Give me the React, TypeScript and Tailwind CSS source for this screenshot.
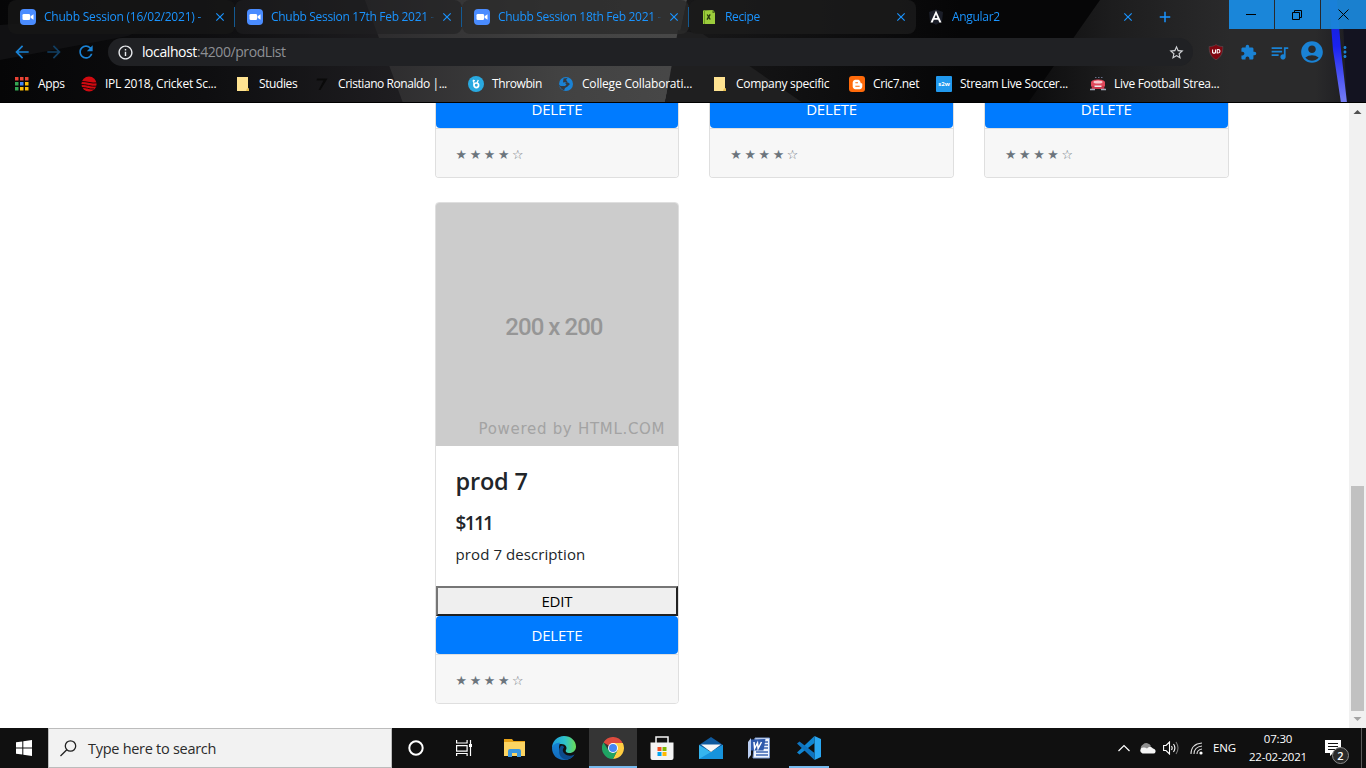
import React from "react";
import {
  MdAccountCircle,
  MdAdd,
  MdArrowBack,
  MdArrowForward,
  MdClose,
  MdExtension,
  MdInfoOutline,
  MdMoreVert,
  MdQueueMusic,
  MdRefresh,
  MdStarBorder,
} from "react-icons/md";
import { FaBloggerB } from "react-icons/fa";

const ZoomIcon = () => (
  <svg width="16" height="16" viewBox="0 0 16 16">
    <rect width="16" height="16" rx="4" fill="#4a8cff" />
    <rect x="2.5" y="5" width="7.6" height="6" rx="1.3" fill="#fff" />
    <path d="M10.6 7.2 13.5 5.2V10.8L10.6 8.8Z" fill="#fff" />
  </svg>
);

const RecipeIcon = () => (
  <svg width="16" height="16" viewBox="0 0 16 16">
    <path d="M2 1.5 12 1l2 2.5V15H2Z" fill="#9ccc3c" />
    <path d="M3.5 1v14" stroke="#6f9f22" strokeWidth="1" />
    <path d="M11.500 1v3H14" fill="#4c6b17" />
    <path d="m6.200 5.500 3 5M9.200 5.300 6 10.700" stroke="#26380d" strokeWidth="1.400" />
  </svg>
);

const AngularIcon = () => (
  <svg width="16" height="16" viewBox="0 0 16 16">
    <path d="M8 .5 15 3l-1 9.500L8 15.800 2 12.500 1 3Z" fill="#1b1e28" />
    <path d="M8 1.500 2.500 13.500h2.200l1.100-2.700h4.400l1.100 2.700h2.200Zm0 4 1.400 3.400H6.600Z" fill="#fff" fillRule="evenodd" />
  </svg>
);

const AppsIcon = () => (
  <svg width="16" height="16" viewBox="0 0 16 16">
    {["#ea4335", "#ea4335", "#ea4335", "#34a853", "#4285f4", "#fbbc05", "#34a853", "#fbbc05", "#fbbc05"].map((c, i) => (
      <rect key={i} x={1 + (i % 3) * 5} y={1 + Math.floor(i / 3) * 5} width="3.500" height="3.500" fill={c} />
    ))}
  </svg>
);

const CricketIcon = () => (
  <svg width="16" height="16" viewBox="0 0 16 16">
    <circle cx="8" cy="8" r="7.600" fill="#d10a10" />
    <path d="M0 5.500C5 5 11 8 16 6.800M0 8.500c5-.5 10 2.500 15.500 1.700M1 11.500c4-.3 7 2 12 1.500" stroke="#240406" strokeWidth="1" fill="none" />
  </svg>
);

const FolderIcon = () => (
  <svg width="16" height="16" viewBox="0 0 16 16">
    <path d="M2 1H13V12.500L14 12.500V15H2Z" fill="#ffe391" />
    <path d="M12 12.500h2V15H11Z" fill="#e8bf4e" />
  </svg>
);

const SevenIcon = () => (
  <svg width="16" height="16" viewBox="0 0 16 16">
    <path d="M3 2.500h10.500L6.500 14H4.500L9.500 4.500H2.500Z" fill="#0a0a0a" />
  </svg>
);

const ThrowbinIcon = () => (
  <svg width="16" height="16" viewBox="0 0 16 16">
    <circle cx="8" cy="8" r="8" fill="#29a9e0" />
    <circle cx="8.300" cy="9.300" r="2.300" fill="none" stroke="#fff" strokeWidth="1.700" />
    <path d="m5.500 3.800.6 5.200M10.300 4 9 7M4.500 5 7 4.500" stroke="#fff" strokeWidth="1.200" />
  </svg>
);

const GlobeIcon = () => (
  <svg width="16" height="16" viewBox="0 0 16 16">
    <circle cx="8" cy="8" r="7" fill="#1a82d4" />
    <path d="M5.500 2.500 9.500 2 8 4 9.500 5.500 7 7 8.500 8.500 7 10H2.500L1.300 8.500v1.500Q3 13 6 14.500L7 12l2.500-1.500L12 8 10 6.500 8 6 5 6.500Z" fill="#353a40" />
  </svg>
);

const BloggerIcon = () => (
  <span className="flex size-4 items-center justify-center rounded-[3px] bg-[#ff6a0a] text-white">
    <FaBloggerB size={11} />
  </span>
);

const StreamIcon = () => (
  <span className="flex size-4 items-center justify-center rounded-[1px] bg-[#2199ee] text-[6px] leading-none font-bold text-white">s2w</span>
);

const StadiumIcon = () => (
  <svg width="16" height="16" viewBox="0 0 16 16">
    <path d="M1 6c1-3.500 13-3.500 14 0v4c0 2-14 2-14 0Z" fill="#e0475a" />
    <ellipse cx="8" cy="6" rx="4.500" ry="1.500" fill="#f7c9cf" />
    <path d="M2 10h12l.5 3h-13Z" fill="#c9374a" />
    <path d="M4.500 9.500h7V11h-7z" fill="#eee" />
    <path d="M0 13.500h5M11 13.500h5" stroke="#a3abba" strokeWidth="1.500" />
    <path d="M5 1.500h1.500M8 1.500h1.500M11 1.500h1.500" stroke="#67708a" />
  </svg>
);

const tabs = [
  { title: "Chubb Session (16/02/2021) -", Icon: ZoomIcon, tone: "bg-[#161617]/80", t: "tracking-[-0.22px]" },
  { title: "Chubb Session 17th Feb 2021 -", Icon: ZoomIcon, tone: "bg-[#202021]/60", t: "tracking-[-0.3px]" },
  { title: "Chubb Session 18th Feb 2021 -", Icon: ZoomIcon, tone: "bg-[#2a2a2b]/80", t: "tracking-[-0.3px]" },
  { title: "Recipe", Icon: RecipeIcon, tone: "bg-[#1b1b1c]/80", t: "tracking-[-0.35px]" },
  { title: "Angular2", Icon: AngularIcon, tone: "", t: "tracking-[-0.3px]" },
];

const bookmarks = [
  { label: "Apps", Icon: AppsIcon, w: "w-[67px]", t: "tracking-[-0.3px]" },
  { label: "IPL 2018, Cricket Sc...", Icon: CricketIcon, w: "w-[154px]", t: "tracking-[-0.25px]" },
  { label: "Studies", Icon: FolderIcon, w: "w-[79px]", t: "tracking-[-0.4px]" },
  { label: "Cristiano Ronaldo |...", Icon: SevenIcon, w: "w-[154px]", t: "tracking-[-0.43px]" },
  { label: "Throwbin", Icon: ThrowbinIcon, w: "w-[90px]", t: "tracking-[-0.4px]" },
  { label: "College Collaborati...", Icon: GlobeIcon, w: "w-[154px]", t: "tracking-[-0.19px]" },
  { label: "Company specific", Icon: FolderIcon, w: "w-[137px]", t: "tracking-[-0.29px]" },
  { label: "Cric7.net", Icon: BloggerIcon, w: "w-[87px]", t: "tracking-[-0.4px]" },
  { label: "Stream Live Soccer...", Icon: StreamIcon, w: "w-[154px]", t: "tracking-[-0.34px]" },
  { label: "Live Football Strea...", Icon: StadiumIcon, w: "w-[154px]", t: "tracking-[-0.3px]" },
];

const ThemeBackdrop = () => (
  <svg className="absolute inset-0" width="1366" height="103" viewBox="0 0 1366 103">
    <defs>
      <linearGradient id="left" x1="0" x2="1">
        <stop offset="0" stopColor="#060607" />
        <stop offset="0.5" stopColor="#0e0e10" />
        <stop offset="1" stopColor="#1f1e21" />
      </linearGradient>
      <linearGradient id="mid" x1="0" x2="1">
        <stop offset="0" stopColor="#2b2a2c" />
        <stop offset="0.6" stopColor="#424242" />
        <stop offset="1" stopColor="#484848" />
      </linearGradient>
      <linearGradient id="shade" x1="0" x2="1">
        <stop offset="0" stopColor="#19191a" />
        <stop offset="1" stopColor="#060607" />
      </linearGradient>
      <linearGradient id="right" x1="0" x2="1">
        <stop offset="0" stopColor="#0c0c0d" />
        <stop offset="0.25" stopColor="#1d1d1e" />
        <stop offset="0.6" stopColor="#2a2a2b" />
        <stop offset="0.85" stopColor="#2a2a2b" />
        <stop offset="1" stopColor="#17171d" />
      </linearGradient>
      <linearGradient id="beam" x1="0" y1="0" x2="0" y2="1">
        <stop offset="0" stopColor="#1020c8" />
        <stop offset="0.45" stopColor="#1a22f0" />
        <stop offset="1" stopColor="#7880f4" />
      </linearGradient>
    </defs>
    <rect width="1366" height="103" fill="#060607" />
    <rect width="410" height="103" fill="url(#left)" />
    <path d="M0 25 180 12 128 36 0 60Z" fill="#111113" />
    <path d="M365 0H687L665 103H403Z" fill="url(#mid)" />
    <path d="M687 0H960V103H665Z" fill="url(#shade)" />
    <path d="M678 30 703 34 803 103H665Z" fill="#1f1f20" />
    <path d="M1100 0H1366V103H1028Z" fill="url(#right)" />
    <path d="M1342 0H1366V103H1347Z" fill="#131320" />
    <path d="M1329 0H1337L1341 50 1347 103H1341L1333 50Z" fill="url(#beam)" />
    <rect y="102" width="1366" height="1" fill="#000" />
  </svg>
);

const Header = () => (
  <header className="relative h-[103px] shrink-0 overflow-hidden bg-[#060608]">
    <ThemeBackdrop />
    <div className="relative flex h-[102px] flex-col">
      <div className="flex h-[34px] pl-2">
        {tabs.map(({ title, Icon, tone, t }, i) => (
          <div key={i} className={`relative flex w-[227px] shrink-0 items-center rounded-lg pl-3 ${tone}`}>
            <Icon />
            <span className={`ml-2 w-[164px] mask-r-from-94% text-[12px] leading-4 whitespace-nowrap text-[#1a94ff] ${t}`}>{title}</span>
            <MdClose className="ml-[5px] shrink-0 text-[#1a94ff]" size={14} />
            {i < 3 && <span className="absolute top-[7px] right-0 h-5 w-px bg-[#145a92]" />}
          </div>
        ))}
        <MdAdd className="mt-[8px] ml-[13px] text-[#1a94ff]" size={18} />
        <div className="ml-auto flex h-[29px] gap-px text-black">
          <div className="flex w-[45px] items-center justify-center bg-[#1a86d9]">
            <svg className="-ml-[2px]" width="10" height="10"><path d="M0 4.500h10" stroke="currentColor" /></svg>
          </div>
          <div className="flex w-[45px] items-center justify-center bg-[#1a86d9]">
            <svg className="-ml-[2px]" width="10" height="10" fill="none" stroke="currentColor"><path d="M.5 2.500h7v7h-7zM2.500 2.500v-2h7v7h-2" /></svg>
          </div>
          <div className="flex w-[45px] items-center justify-center bg-[#1a86d9]/95">
            <svg className="-ml-[1px]" width="11" height="11" stroke="currentColor"><path d="m.5.500 10 10M10.500.500l-10 10" /></svg>
          </div>
        </div>
      </div>
      <div className="flex h-9 items-center pl-3 text-[#1a82d4]">
        <MdArrowBack size={20} />
        <MdArrowForward className="ml-3 text-[#123f63]" size={20} />
        <MdRefresh className="ml-3" size={20} />
        <div className="ml-3 flex h-7 w-[1085px] items-center rounded-full bg-[#202124] pr-2 pl-[9px] text-[#e8eaed]">
          <MdInfoOutline size={17} />
          <p className="ml-2 text-[14px] leading-5 tracking-[-0.42px] text-[#8e9094]">
            <span className="text-white">localhost</span>:4200/prodList
          </p>
          <MdStarBorder className="ml-auto text-[#d0d2d5]" size={17} />
        </div>
        <svg className="ml-[15px]" width="16" height="16" viewBox="0 0 16 16">
          <path d="M8 .5C10 2 12 2.500 14.800 2.500 15 9 13 13 8 15.800 3 13 1 9 1.200 2.500 4 2.500 6 2 8 .5Z" fill="#800610" stroke="#5d5054" strokeWidth=".6" />
          <path d="M4.600 5.500v3q1.500 1.400 2.900 0v-3M9.200 5.500v3.400q2.700.3 2.700-1.700t-2.700-1.700" fill="none" stroke="#fff" strokeWidth="1.100" />
        </svg>
        <MdExtension className="ml-4" size={17} />
        <MdQueueMusic className="ml-[12px]" size={21} />
        <MdAccountCircle className="ml-[9px]" size={26} />
        <MdMoreVert className="ml-[11px] shrink-0" size={18} />
      </div>
      <nav className="flex h-8 items-center pb-[4px] pl-[14px]">
        {bookmarks.map(({ label, Icon, w, t }, i) => (
          <div key={i} className={`flex shrink-0 items-center gap-2 ${w}`}>
            <Icon />
            <span className={`text-[12px] leading-4 whitespace-nowrap text-white ${t}`}>{label}</span>
          </div>
        ))}
      </nav>
    </div>
  </header>
);

const Rating = () => (
  <div className="flex h-[49px] shrink-0 items-center border-t border-[#dfdfdf] bg-[#f7f7f7] pt-1 pl-5 font-['DejaVu_Sans'] text-[12.800px] leading-5 text-[#6c757d]">
    <span className="flex gap-[3.400px] tracking-[-0.75px]">
      {["★", "★", "★", "★", "☆"].map((s, i) => (
        <span key={i}>{s}</span>
      ))}
    </span>
  </div>
);

const DeleteButton = () => (
  <button className="flex h-[38px] w-full shrink-0 items-center justify-center rounded-[4px] bg-[#007bff] text-[15px] tracking-[-0.200px] text-white">DELETE</button>
);

const ProductCard = () => (
  <article className="overflow-hidden rounded-[4px] border border-[#dfdfdf] bg-white text-[#212529]">
    <div className="relative flex h-[243px] items-center justify-center bg-[#ccc] text-[#969696]">
      <span className="mt-[5px] -ml-[6px] font-['Roboto'] text-[24px] font-medium tracking-[-0.95px]">200 x 200</span>
      <span className="absolute right-[13px] bottom-[7px] font-['DejaVu_Sans'] text-[15px] leading-5 tracking-[0.7px] text-[#a3a3a3]">Powered by HTML.COM</span>
    </div>
    <div className="h-[140px] px-5 pt-[21px]">
      <h4 className="text-[23.500px] leading-[29px] font-[550] tracking-[-0.2px]">prod 7</h4>
      <h5 className="mt-[15px] text-[19px] leading-6 font-[550] tracking-[-1.7px]">$111</h5>
      <p className="mt-[7px] text-[15px] leading-6 tracking-[0.08px]">prod 7 description</p>
    </div>
    <button className="flex h-[30px] w-full items-center justify-center border-2 border-t-[#767676] border-r-[#212121] border-b-[#212121] border-l-[#767676] bg-[#efefef] text-[15px] tracking-[-0.200px] text-black">EDIT</button>
    <DeleteButton />
    <Rating />
  </article>
);

const PartialCard = () => (
  <article className="flex h-[75px] flex-col justify-end overflow-hidden rounded-b-[4px] border-x border-b border-[#dfdfdf] bg-white">
    <DeleteButton />
    <Rating />
  </article>
);

const Content = () => (
  <div className="flex min-h-0 flex-1 bg-white">
    <main className="flex-1 overflow-hidden pl-[434.600px]">
      <div className="grid w-[794px] grid-cols-3 gap-x-[30px] gap-y-6">
        <PartialCard />
        <PartialCard />
        <PartialCard />
        <ProductCard />
      </div>
    </main>
    <div className="flex w-[17px] flex-col items-center bg-[#f1f1f1]">
      <svg width="17" height="17"><path d="M4.500 11 8.500 7l4 4Z" fill="#505050" /></svg>
      <div className="mt-auto h-[225px] w-[13px] bg-[#c1c1c1]" />
      <svg width="17" height="17"><path d="m4.500 6 4 4 4-4Z" fill="#a3a3a3" /></svg>
    </div>
  </div>
);

const ExplorerIcon = () => (
  <svg width="22" height="20" viewBox="0 0 22 20">
    <path d="M0 1h8l1.500 2H21v14H0Z" fill="#e8a317" />
    <path d="M0 4h21v14H0Z" fill="#fcd462" />
    <path d="M4 19v-6q0-2 2-2h9q2 0 2 2v6h-4v-4H8v4Z" fill="#3a96dd" />
  </svg>
);

const EdgeIcon = () => (
  <svg width="24" height="24" viewBox="0 0 24 24">
    <defs>
      <linearGradient id="edgeTop" x1="0" x2="1">
        <stop offset="0" stopColor="#1c9de0" />
        <stop offset=".55" stopColor="#2fc3c9" />
        <stop offset="1" stopColor="#6bdc54" />
      </linearGradient>
      <linearGradient id="edgeLow" x1="0" y1="0" x2="0" y2="1">
        <stop offset="0" stopColor="#1583d5" />
        <stop offset="1" stopColor="#1269bb" />
      </linearGradient>
    </defs>
    <path d="M0 12C0 5 5.500 0 12 0c7 0 12 5 12 10.500 0 4-3 6.500-6.500 6.500-3 0-4.500-1.500-3.500-3 1.600-2.500-.5-6-4.500-6C5 8 1 10 0 12Z" fill="url(#edgeTop)" />
    <path d="M0 12C.5 8.500 4.500 6.500 8.500 6.800 6 9 6.500 18 13 20c4 1.200 7 .5 9.500-1.500C20.500 22 17 24 12 24 5 24 0 19 0 12Z" fill="url(#edgeLow)" />
    <path d="M8.700 10C4.500 17 9 24 15 23.500c4-.6 6.500-3 7.500-5-3 1.800-7.500 1.500-9.500-.5-2.500-2-3-4.500-1-6.500-.2-1.500-1.500-2-3.300-1.500Z" fill="#0c4a8c" />
  </svg>
);

const ChromeIcon = () => (
  <svg width="22" height="22" viewBox="0 0 22 22">
    <path d="M11 11 1.470 5.500A11 11 0 0 1 20.530 5.500Z" fill="#dd4b3e" />
    <path d="M11 6H20.800A11 11 0 0 1 11 22L15.400 13.500Z" fill="#ffcd41" />
    <path d="M1.470 5.500 6.700 13.500 11 16l4.400-2.500L11 22A11 11 0 0 1 1.470 5.500Z" fill="#1fa463" />
    <circle cx="11" cy="11" r="5" fill="#fff" />
    <circle cx="11" cy="11" r="4" fill="#4587f4" />
  </svg>
);

const StoreIcon = () => (
  <svg width="24" height="24" viewBox="0 0 24 24">
    <path d="M6 7V1h12v6" fill="none" stroke="#f4f4f4" strokeWidth="1.500" />
    <path d="M.5 6.500h23V22q0 2-2 2h-19q-2 0-2-2Z" fill="#f4f4f4" />
    <path d="M7.500 11h4v4h-4z" fill="#f25022" />
    <path d="M12.500 11h4v4h-4z" fill="#7fba00" />
    <path d="M7.500 16h4v4h-4z" fill="#00a4ef" />
    <path d="M12.500 16h4v4h-4z" fill="#ffb900" />
  </svg>
);

const MailIcon = () => (
  <svg width="24" height="22" viewBox="0 0 24 22">
    <path d="M0 8 12 0l12 8v5H0Z" fill="#0f5a9e" />
    <path d="M0 8l12 7 12-7v14H0Z" fill="#35b5ef" />
    <path d="M0 22 24 8v14Z" fill="#1793dc" />
    <path d="M2 7.500h20L12 15Z" fill="#f8f8f8" />
  </svg>
);

const WordIcon = () => (
  <svg width="23" height="23" viewBox="0 0 23 23">
    <path d="M7 1h14.500v20H5Z" fill="#eef3fc" stroke="#7b9ad0" />
    <path d="M15 5h5M15 8h5M15 11h5M8 15h12M8 18h12" stroke="#3d66b0" strokeWidth="1.300" />
    <path d="M3 2.500 17.500 2 15.500 13.500H1.500Z" fill="#2e5aac" />
    <path d="M0 5 3 1v17l-3 4Z" fill="#b9cdf0" />
    <path d="m6 5 .6 6.500L9.500 6l.6 5.500L13.500 5" fill="none" stroke="#fff" strokeWidth="1.500" />
  </svg>
);

const VsCodeIcon = () => (
  <svg width="24" height="24" viewBox="0 0 24 24">
    <path d="M17.500 0 24 3v18l-6.500 3Z" fill="#2aa7f2" />
    <path d="M17.500 0v7L2.500 18.500 0 16.500Z" fill="#1186d2" />
    <path d="M0 7.500 2.500 5.500 17.500 17v7Z" fill="#0f74bf" />
  </svg>
);

const apps = [
  { Icon: ExplorerIcon, cell: "w-12" },
  { Icon: EdgeIcon, cell: "w-12" },
  { Icon: ChromeIcon, cell: "w-12 bg-[#353535] shadow-[inset_0_-2px_0_#76b9ed]" },
  { Icon: StoreIcon, cell: "w-12" },
  { Icon: MailIcon, cell: "w-12" },
  { Icon: WordIcon, cell: "w-12 pr-px" },
  { Icon: VsCodeIcon, cell: "mx-1 w-10 shadow-[inset_0_-2px_0_#76b9ed]" },
];

const Taskbar = () => (
  <footer className="flex h-10 shrink-0 items-center bg-[#101010] text-white">
    <div className="flex w-12 justify-center">
      <svg width="16" height="16" viewBox="0 0 16 16" fill="#fff">
        <path d="M0 2.300 6.300 1.400V7.500H0ZM7.300 1.300 16 0V7.500H7.300ZM0 8.500h6.300v6.100L0 13.700ZM7.300 8.500H16V16L7.300 14.700Z" />
      </svg>
    </div>
    <div className="flex h-10 w-[344px] items-center border border-[#bcbcbc] bg-[#f2f2f2] pl-[11px] text-[#2b2b2b]">
      <svg width="17" height="17" fill="none" stroke="#222" strokeWidth="1.300">
        <circle cx="10.500" cy="6" r="5.200" />
        <path d="M6.800 9.700.5 16" />
      </svg>
      <span className="mt-[2px] ml-[11px] text-[14.500px] leading-5 tracking-[-0.28px]">Type here to search</span>
    </div>
    <div className="flex w-12 justify-center">
      <svg width="18" height="18"><circle cx="9" cy="9" r="6.700" fill="none" stroke="#fff" strokeWidth="2" /></svg>
    </div>
    <div className="flex w-12 justify-center">
      <svg width="17" height="16" fill="none" stroke="#fff" strokeWidth="1.200">
        <path d="M.6 0v3h10.500V0M.6 5.600h10.500v5.500H.6zM.6 16v-2.500h10.500V16M14.500 0v16" />
        <path d="M13 5.500h3" strokeWidth="3" />
      </svg>
    </div>
    <div className="ml-[3px] flex gap-px">
      {apps.map(({ Icon, cell }, i) => (
        <div key={i} className={`flex h-10 items-center justify-center ${cell}`}>
          <Icon />
        </div>
      ))}
    </div>
    <div className="ml-auto flex h-10 items-center">
      <svg width="12" height="8" fill="none" stroke="#fff" strokeWidth="1.200"><path d="m.5 7 5.500-5.500L11.500 7" /></svg>
      <svg className="ml-[9px]" width="17" height="12" viewBox="0 0 17 12">
        <path d="M3 9a4 4 0 0 1 1-6.500A5 5 0 0 1 12 4L8 9Z" fill="#8e8e8e" />
        <path d="M3.500 11.500A3 3 0 0 1 4 5.600Q6 5 8 6.500 11 3 14 6.500 17 7 16.500 10q-.5 1.500-2 1.500Z" fill="#f5f5f5" />
      </svg>
      <svg className="ml-[7px]" width="17" height="14" viewBox="0 0 17 14" fill="none" stroke="#fff" strokeWidth="1.100">
        <path d="M.6 4.500H3L6.500 1v12L3 9.500H.6ZM8.500 5q1.300 2 0 4M10.500 3q2.800 4 0 8" />
        <path d="M13 1q4 6 0 12" stroke="#777" />
      </svg>
      <svg className="ml-[10px]" width="13" height="13" viewBox="0 0 13 13" fill="none" stroke="#ddd" strokeWidth="1.100">
        <path d="M1 12Q1 2 12 1M4 12q0-7 8-8M7 12q0-4 5-5" />
        <circle cx="11" cy="11" r="1.600" fill="#fff" stroke="none" />
      </svg>
      <span className="ml-[10px] w-[24px] text-[11.500px] tracking-[-0.2px]">ENG</span>
      <div className="ml-[7px] flex w-[68px] flex-col items-center text-[11.500px] leading-[18px] tracking-[-0.200px]">
        <span>07:30</span>
        <span>22-02-2021</span>
      </div>
      <div className="relative ml-[13px] h-10 w-[25px]">
        <svg className="mt-3" width="16" height="16" viewBox="0 0 16 16">
          <path d="M0 0h16v13H8l-3 3v-3H0Z" fill="#fff" />
          <path d="M3 3.500h10M3 6.500h10M3 9.500h7" stroke="#111" />
        </svg>
        <span className="absolute top-[19px] left-[7px] flex size-[17px] items-center justify-center rounded-full border border-[#8a8a8a] bg-[#2a2a2a] text-[11px] leading-none font-semibold">2</span>
      </div>
      <div className="ml-[11px] h-10 w-[5px] border-l border-[#5a5a5a]" />
    </div>
  </footer>
);

export default function App() {
  return (
    <div className="flex h-[768px] w-[1366px] flex-col overflow-hidden bg-white font-['Open_Sans','Noto_Sans',sans-serif]">
      <Header />
      <Content />
      <Taskbar />
    </div>
  );
}
